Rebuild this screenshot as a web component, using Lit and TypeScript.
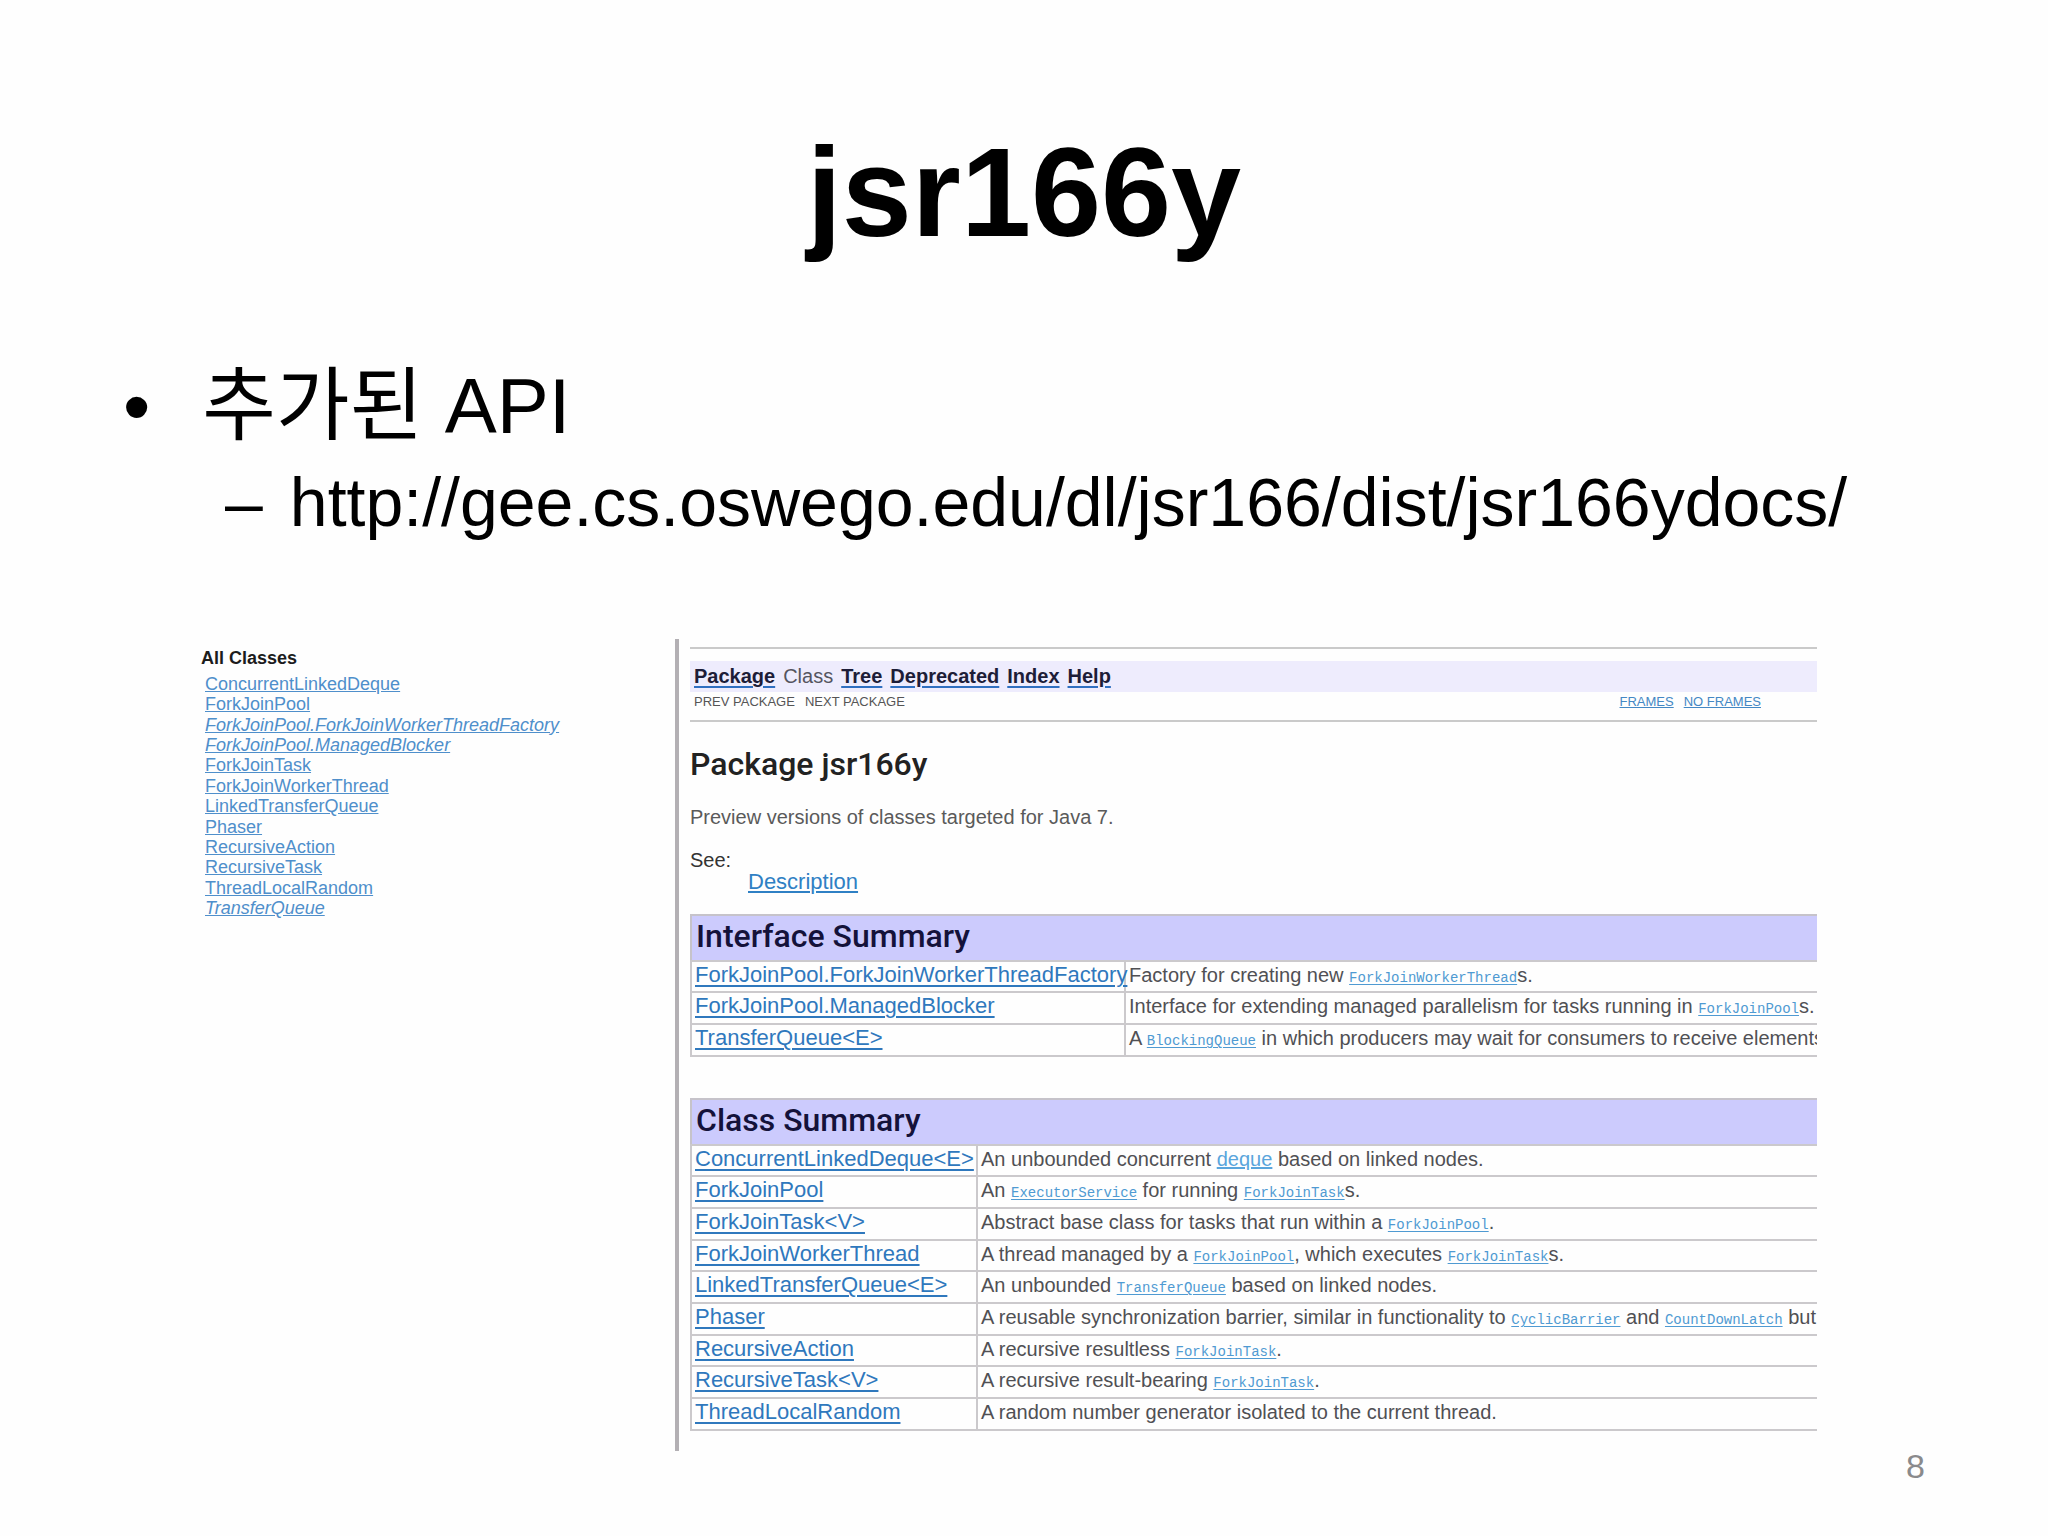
import { LitElement, html, css, type TemplateResult } from "lit";
import { customElement, property } from "lit/decorators.js";

type Row = { name: string; text: TemplateResult };

const code = (name: string) => html`<a class="code" href="#${name}">${name}</a>`;

const classes: { name: string; isInterface?: boolean }[] = [
  { name: "ConcurrentLinkedDeque" },
  { name: "ForkJoinPool" },
  { name: "ForkJoinPool.ForkJoinWorkerThreadFactory", isInterface: true },
  { name: "ForkJoinPool.ManagedBlocker", isInterface: true },
  { name: "ForkJoinTask" },
  { name: "ForkJoinWorkerThread" },
  { name: "LinkedTransferQueue" },
  { name: "Phaser" },
  { name: "RecursiveAction" },
  { name: "RecursiveTask" },
  { name: "ThreadLocalRandom" },
  { name: "TransferQueue", isInterface: true },
];

const interfaceRows: Row[] = [
  {
    name: "ForkJoinPool.ForkJoinWorkerThreadFactory",
    text: html`Factory for creating new ${code("ForkJoinWorkerThread")}s.`,
  },
  {
    name: "ForkJoinPool.ManagedBlocker",
    text: html`Interface for extending managed parallelism for tasks running in ${code("ForkJoinPool")}s.`,
  },
  {
    name: "TransferQueue<E>",
    text: html`A ${code("BlockingQueue")} in which producers may wait for consumers to receive elements`,
  },
];

const classRows: Row[] = [
  {
    name: "ConcurrentLinkedDeque<E>",
    text: html`An unbounded concurrent <a class="plain" href="#deque">deque</a> based on linked nodes.`,
  },
  {
    name: "ForkJoinPool",
    text: html`An ${code("ExecutorService")} for running ${code("ForkJoinTask")}s.`,
  },
  {
    name: "ForkJoinTask<V>",
    text: html`Abstract base class for tasks that run within a ${code("ForkJoinPool")}.`,
  },
  {
    name: "ForkJoinWorkerThread",
    text: html`A thread managed by a ${code("ForkJoinPool")}, which executes ${code("ForkJoinTask")}s.`,
  },
  {
    name: "LinkedTransferQueue<E>",
    text: html`An unbounded ${code("TransferQueue")} based on linked nodes.`,
  },
  {
    name: "Phaser",
    text: html`A reusable synchronization barrier, similar in functionality to ${code("CyclicBarrier")} and ${code("CountDownLatch")} but`,
  },
  { name: "RecursiveAction", text: html`A recursive resultless ${code("ForkJoinTask")}.` },
  { name: "RecursiveTask<V>", text: html`A recursive result-bearing ${code("ForkJoinTask")}.` },
  {
    name: "ThreadLocalRandom",
    text: html`A random number generator isolated to the current thread.`,
  },
];

@customElement("summary-table")
class SummaryTable extends LitElement {
  @property() heading = "";
  @property({ attribute: false }) rows: Row[] = [];
  @property({ type: Boolean, reflect: true }) narrow = false;

  static styles = css`
    :host {
      display: block;
    }
    .table {
      width: 100%;
      border-collapse: collapse;
      table-layout: fixed;
      border: 2px solid #c6c3ca;
      border-right: 0;
    }
    .name-col {
      width: 434px;
    }
    :host([narrow]) .name-col {
      width: 286px;
    }
    .heading {
      box-sizing: border-box;
      height: 46px;
      padding: 0 4px 4px;
      background: #cccbfd;
      color: #14123a;
      font-family: Roboto, "Liberation Sans", sans-serif;
      font-size: 32px;
      font-weight: 500;
      line-height: 36px;
      text-align: left;
    }
    .cell {
      box-sizing: border-box;
      height: 32px;
      padding: 0 3px 4px;
      border: 2px solid #cbc9cc;
      border-right: 0;
      line-height: 24px;
      font-size: 20px;
      font-weight: 400;
      color: #505054;
      text-align: left;
      vertical-align: middle;
      white-space: nowrap;
    }
    .row:nth-child(3n + 1) .cell {
      height: 31px;
    }
    .row .name {
      font-size: 22px;
    }
    .link {
      color: #2f78bd;
      text-decoration-thickness: 2px;
      text-underline-offset: 3px;
    }
    .code {
      font-family: "Liberation Mono", monospace;
      font-size: 14px;
      line-height: 1;
      color: #4f9ad2;
      text-underline-offset: 2px;
    }
    .plain {
      color: #5aa5dc;
    }
  `;

  render() {
    return html`
      <table class="table">
        <colgroup>
          <col class="name-col" />
          <col />
        </colgroup>
        <thead>
          <tr>
            <th class="heading" colspan="2">${this.heading}</th>
          </tr>
        </thead>
        <tbody>
          ${this.rows.map(
            (row) => html`<tr class="row">
              <th class="cell name" scope="row"><a class="link" href="#${row.name}">${row.name}</a></th>
              <td class="cell">${row.text}</td>
            </tr>`,
          )}
        </tbody>
      </table>
    `;
  }
}

@customElement("app-root")
class AppRoot extends LitElement {
  static styles = css`
    :host {
      display: block;
      min-height: 100vh;
      background: #fefefe;
      color: #000;
      font-family: "Liberation Sans", "Noto Sans CJK KR", sans-serif;
    }
    .slide {
      display: flex;
      flex-direction: column;
      padding: 121px 123px 0;
    }
    .title {
      margin: 0;
      font-size: 126px;
      line-height: 144px;
      text-align: center;
    }
    .points,
    .subpoints {
      margin: 0;
      padding: 0;
      list-style: none;
    }
    .points {
      margin-top: 91px;
    }
    .point,
    .subpoint {
      display: flex;
    }
    .point {
      gap: 52px;
      font-size: 78px;
      line-height: 100px;
    }
    .korean {
      font-size: 80px;
      line-height: 1;
    }
    .subpoint {
      gap: 27px;
      padding-left: 102px;
      font-size: 68px;
      line-height: 92px;
    }
    .shot {
      display: grid;
      grid-template-columns: 474px 1fr;
      margin: 91px 108px 0 78px;
    }
    .sidebar {
      padding-top: 7px;
    }
    .sidebar-title {
      margin: 0;
      font-size: 18px;
      line-height: 24px;
      color: #1c1c1c;
    }
    .class-list {
      display: flex;
      flex-direction: column;
      justify-content: space-between;
      height: 244px;
      margin: 4px 0 0 4px;
      padding: 0;
      list-style: none;
      font-size: 18px;
      line-height: 20px;
    }
    .class-link {
      color: #4f8fcb;
    }
    .interface {
      font-style: italic;
    }
    .pane {
      min-width: 0;
      padding: 8px 0 20px 11px;
      border-left: 4px solid #b3b0b4;
      overflow: hidden;
    }
    .bar {
      padding: 12px 0 11px;
      border: solid #cacaca;
      border-width: 2px 0;
    }
    .nav {
      display: flex;
      gap: 8px;
      padding: 0 4px;
      background: #eeecfd;
      font-size: 20px;
      line-height: 31px;
      height: 31px;
      margin-bottom: 3px;
    }
    .nav-link {
      color: #1d1d38;
      font-weight: 700;
      text-decoration-color: #2f6fc0;
      text-decoration-thickness: 2px;
      text-underline-offset: 3px;
    }
    .nav-current {
      color: #55555f;
    }
    .subnav {
      display: flex;
      justify-content: space-between;
      padding: 0 56px 0 4px;
      font-size: 13px;
      line-height: 14px;
      color: #555;
    }
    .group {
      display: flex;
      gap: 10px;
    }
    .frame-link {
      color: #4488c4;
    }
    .package {
      margin: 22px 0 0;
      font-family: Roboto, "Liberation Sans", sans-serif;
      font-size: 32px;
      font-weight: 500;
      line-height: 40px;
      color: #222;
    }
    .text {
      margin: 21px 0 0;
      font-size: 20px;
      line-height: 24px;
      color: #5a5a5a;
    }
    .see {
      margin: 20px 0 21px;
      font-size: 20px;
      line-height: 22px;
      color: #333;
    }
    .see-item {
      margin: 0 0 0 58px;
      font-size: 22px;
    }
    .see-link {
      color: #2f80c4;
    }
    .classes {
      margin-top: 41px;
    }
    .page-number {
      margin: 0;
      font-size: 34px;
      line-height: 30px;
      color: #8a8a8c;
      text-align: right;
    }
  `;

  render() {
    return html`
      <main class="slide">
        <h1 class="title">jsr166y</h1>
        <ul class="points">
          <li class="point"><span>•</span><span><span class="korean" lang="ko">추가된</span> API</span></li>
          <li>
            <ul class="subpoints">
              <li class="subpoint"><span>–</span><span>http://gee.cs.oswego.edu/dl/jsr166/dist/jsr166ydocs/</span></li>
            </ul>
          </li>
        </ul>
        <section class="shot">
          <aside class="sidebar">
            <h2 class="sidebar-title">All Classes</h2>
            <ul class="class-list">
              ${classes.map(
                (c) => html`<li>
                  <a class="class-link ${c.isInterface ? "interface" : ""}" href="#${c.name}">${c.name}</a>
                </li>`,
              )}
            </ul>
          </aside>
          <div class="pane">
            <div class="bar">
              <nav class="nav">
                <a class="nav-link" href="#package">Package</a>
                <span class="nav-current">Class</span>
                <a class="nav-link" href="#tree">Tree</a>
                <a class="nav-link" href="#deprecated">Deprecated</a>
                <a class="nav-link" href="#index">Index</a>
                <a class="nav-link" href="#help">Help</a>
              </nav>
              <div class="subnav">
                <div class="group"><span>PREV PACKAGE</span><span>NEXT PACKAGE</span></div>
                <div class="group">
                  <a class="frame-link" href="#frames">FRAMES</a>
                  <a class="frame-link" href="#no-frames">NO FRAMES</a>
                </div>
              </div>
            </div>
            <h2 class="package">Package jsr166y</h2>
            <p class="text">Preview versions of classes targeted for Java 7.</p>
            <dl class="see">
              <dt>See:</dt>
              <dd class="see-item"><a class="see-link" href="#description">Description</a></dd>
            </dl>
            <summary-table heading="Interface Summary" .rows=${interfaceRows}></summary-table>
            <summary-table class="classes" heading="Class Summary" narrow .rows=${classRows}></summary-table>
          </div>
        </section>
        <p class="page-number">8</p>
      </main>
    `;
  }
}
